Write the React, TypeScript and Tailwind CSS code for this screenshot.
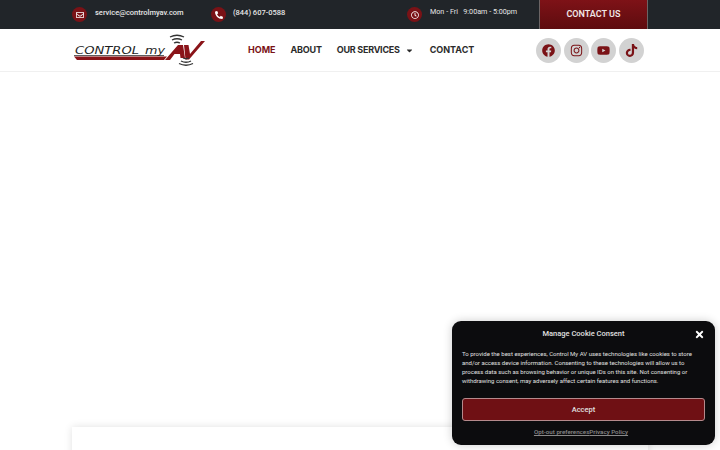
import {
  FaCaretDown,
  FaFacebook,
  FaInstagram,
  FaPhoneAlt,
  FaRegClock,
  FaRegEnvelope,
  FaTiktok,
  FaTimes,
  FaYoutube,
} from "react-icons/fa";
import type { ReactNode } from "react";

function TopItem({
  icon,
  text,
  className,
  textClass,
}: {
  icon: ReactNode;
  text: string;
  className: string;
  textClass: string;
}) {
  return (
    <div className={"flex items-center " + className}>
      <span className="flex h-[15px] w-[15px] items-center justify-center rounded-full bg-[#7a1216] text-[8px] text-white">
        {icon}
      </span>
      <span className={"mb-[4px] whitespace-pre text-[#e6e6e6] " + textClass}>{text}</span>
    </div>
  );
}

function Logo() {
  return (
    <svg width="132" height="34" viewBox="0 0 132 34" className="ml-[2px] shrink-0">
      <g fontFamily="'DejaVu Sans', sans-serif" fontStyle="italic" fontSize="10.5" fill="#1f1f1f">
        <text x="1" y="21" textLength="64" lengthAdjust="spacingAndGlyphs">
          CONTROL
        </text>
        <text x="71" y="21" textLength="20" lengthAdjust="spacingAndGlyphs">
          my
        </text>
      </g>
      <path d="M0 22.6H90" stroke="#1f1f1f" strokeWidth="0.8" />
      <path d="M0 23.5H93L90 27H3Z" fill="#8a1419" />
      <path d="M91 27L104 12H109L111 25H106.5L106 21H100.5L96 27Z" fill="#8a1419" />
      <path d="M110 12H114.5L116 21L127 8H131L115 26.5H111.5Z" fill="#8a1419" />
      <g stroke="#333" strokeWidth="1.3" fill="none">
        <path d="M96 4Q103 0.5 110 4" />
        <path d="M98 7Q103 4.5 108 7" />
        <path d="M100 10Q103 8.5 106 10" />
        <path d="M109 25Q112 26.5 115 25" />
        <path d="M107 28Q112 30.5 117 28" />
        <path d="M105 30.5Q112 34 119 30.5" />
      </g>
    </svg>
  );
}

function SocialIcon({ children }: { children: ReactNode }) {
  return (
    <span className="flex h-[25px] w-[25px] items-center justify-center rounded-full bg-[#d2d2d2] text-[13px] text-[#7a1216]">
      {children}
    </span>
  );
}

export default function App() {
  return (
    <div className="relative flex h-[450px] w-[720px] flex-col overflow-hidden bg-white font-['Roboto',sans-serif]">
      <div className="flex h-[29px] shrink-0 items-center bg-[#212529] pl-[72px]">
        <TopItem
          icon={<FaRegEnvelope />}
          text="service@controlmyav.com"
          className="w-[139px]"
          textClass="ml-2 text-[7.5px] font-medium"
        />
        <TopItem
          icon={<FaPhoneAlt />}
          text="(844) 607-0588"
          className="w-[196px]"
          textClass="ml-[7px] text-[7.5px] font-medium"
        />
        <TopItem
          icon={<FaRegClock />}
          text="Mon - Fri   9:00am - 5:00pm"
          className="w-[132px]"
          textClass="ml-2 text-[7.2px]"
        />
        <div className="flex h-[29px] w-[109px] items-center justify-center border-x border-[#6b6464] bg-gradient-to-b from-[#7e1217] to-[#5e0c0f] text-[9px] font-semibold text-[#f0e6e6]">
          CONTACT US
        </div>
      </div>

      <div className="flex h-[43px] shrink-0 items-center border-b border-[#f0f0f0] pl-[72px]">
        <Logo />
        <nav className="ml-[42px] flex w-[288px] items-center font-['Inter',sans-serif] text-[9px] font-bold whitespace-nowrap text-[#2b2b2b]">
          <span className="text-[#7a1216]">HOME</span>
          <span className="ml-[15px] tracking-[-0.2px]">ABOUT</span>
          <span className="ml-[15px] tracking-[-0.25px]">OUR SERVICES</span>
          <FaCaretDown className="ml-[5px] text-[9px]" />
          <span className="ml-[16px]">CONTACT</span>
        </nav>
        <div className="flex gap-[2.5px]">
          <SocialIcon>
            <FaFacebook />
          </SocialIcon>
          <SocialIcon>
            <FaInstagram />
          </SocialIcon>
          <SocialIcon>
            <FaYoutube />
          </SocialIcon>
          <SocialIcon>
            <FaTiktok />
          </SocialIcon>
        </div>
      </div>

      <div className="flex-1 px-[72px] pt-[355px]">
        <div className="h-[40px] bg-white shadow-[0_0_8px_rgba(0,0,0,0.12)]" />
      </div>

      <div className="absolute left-[452px] top-[321px] flex h-[124px] w-[263px] flex-col rounded-[9px] bg-[#0c0c0e] px-[10px] text-[#e0e0e0] shadow-[0_0_10px_rgba(0,0,0,0.2)]">
        <div className="mt-[8px] text-center text-[7.5px] font-medium leading-[10px]">Manage Cookie Consent</div>
        <FaTimes className="absolute right-[10px] top-[8px] text-[11px] text-white" />
        <p className="mt-[10px] w-[238px] text-[6px] leading-[9px]">
          To provide the best experiences, Control My AV uses technologies like cookies to store and/or access device
          information. Consenting to these technologies will allow us to process data such as browsing behavior or
          unique IDs on this site. Not consenting or withdrawing consent, may adversely affect certain features and
          functions.
        </p>
        <div className="mt-[13px] flex h-[23px] items-center justify-center rounded-[3px] border border-[#b58a8c] bg-[#6f1014] text-[7.5px] font-medium">
          Accept
        </div>
        <div className="mt-[7px] flex justify-center pr-[5px] text-[6.2px] font-medium text-[#8a8a8a] underline">
          <span>Opt-out preferences</span>
          <span>Privacy Policy</span>
        </div>
      </div>
    </div>
  );
}
